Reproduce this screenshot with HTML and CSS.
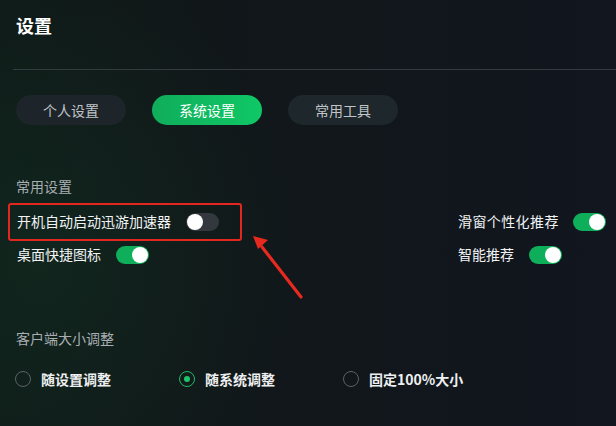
FILE: index.html
```html
<!DOCTYPE html>
<html lang="zh-CN">
<head>
<meta charset="utf-8">
<title>设置</title>
<link rel="stylesheet" href="styles.css">
</head>
<body>
<div class="page">
  <h1 class="title">设置</h1>
  <div class="divider"></div>
  <nav class="tabs">
    <span class="tab">个人设置</span>
    <span class="tab active">系统设置</span>
    <span class="tab">常用工具</span>
  </nav>

  <section class="section">
    <h2 class="section-title">常用设置</h2>
    <div class="grid">
      <div class="row"><span class="label">开机自动启动迅游加速器</span><span class="toggle"></span></div>
      <div class="row wide"><span class="label">滑窗个性化推荐</span><span class="toggle on"></span></div>
      <div class="row"><span class="label">桌面快捷图标</span><span class="toggle on"></span></div>
      <div class="row"><span class="label">智能推荐</span><span class="toggle on"></span></div>
    </div>
  </section>

  <section class="section size">
    <h2 class="section-title">客户端大小调整</h2>
    <div class="radios">
      <label class="radio"><span class="dot"></span><span class="label">随设置调整</span></label>
      <label class="radio"><span class="dot checked"></span><span class="label">随系统调整</span></label>
      <label class="radio"><span class="dot"></span><span class="label">固定100%大小</span></label>
    </div>
  </section>

  <div class="highlight"></div>
  <svg class="arrow" width="70" height="80" viewBox="0 0 70 80">
    <path d="M51 66 L12 16" stroke="#e8291f" stroke-width="3.2" stroke-linecap="round" fill="none"/>
    <polygon points="3,5 18,9 8,18" fill="#e8291f"/>
  </svg>
</div>
</body>
</html>
```

FILE: styles.css
```css
* { box-sizing: border-box; margin: 0; padding: 0; }
html, body { width: 616px; height: 426px; overflow: hidden; }
body {
  font-family: "Noto Sans CJK SC", "Noto Sans", sans-serif;
  color: #f2f3f4;
  background:
    radial-gradient(ellipse 260px 300px at 40px 260px, rgba(20, 60, 40, 0.35), rgba(20, 60, 40, 0) 100%),
    linear-gradient(90deg, #0f1a18 0%, #111719 35%, #11161f 100%);
}
.page { position: relative; height: 426px; padding: 13px 0 0 16px; }
.title { font-size: 18px; font-weight: 700; line-height: 24px; color: #ffffff; }
.divider { height: 1px; background: #343b40; margin: 32px 0 0 -3px; }
.tabs { display: flex; gap: 26px; margin: 25px 0 0 0; }
.tab {
  width: 110px; height: 30px; border-radius: 15px;
  display: flex; align-items: center; justify-content: center;
  font-size: 14px; color: #c0c4c8; background: #1d242a;
}
.tab:last-child { background: #1e272c; }
.tab.active { color: #ffffff; background: linear-gradient(90deg, #10ad5b, #0fc866); }
.section { margin-top: 51px; }
.section-title { font-size: 14px; font-weight: 400; line-height: 20px; color: #a9aeb2; }
.grid { display: grid; grid-template-columns: 441px auto; row-gap: 14px; margin-top: 16px; padding-left: 1px; }
.row { display: flex; align-items: center; gap: 15px; height: 19px; }
.row.wide { gap: 14px; }
.row.wide .label { letter-spacing: 0.4px; }
.label { font-size: 14px; line-height: 19px; color: #f2f3f4; }
.toggle { position: relative; width: 33px; height: 18px; border-radius: 9px; background: #32383e; }
.toggle::after {
  content: ""; position: absolute; top: 1px; left: 1px;
  width: 16px; height: 16px; border-radius: 50%; background: #ffffff;
}
.toggle.on { background: #0fae5a; }
.toggle.on::after { left: 16px; }
.size { margin-top: 64px; }
.radios { display: grid; grid-template-columns: 164px 164px auto; margin: 21px 0 0 -1px; }
.radio { display: flex; align-items: center; gap: 10px; height: 20px; }
.radio .label { font-weight: 700; color: #eeeff0; }
.dot { width: 16px; height: 16px; border-radius: 50%; border: 1px solid #5b6167; position: relative; }
.dot.checked { border-color: #1fb866; }
.dot.checked::after {
  content: ""; position: absolute; top: 4px; left: 4px;
  width: 6px; height: 6px; border-radius: 50%; background: #1fc46c;
}
.highlight {
  position: absolute; left: 8px; top: 203px; width: 234px; height: 38px;
  border: 2px solid #e3271f; border-radius: 3px;
}
.arrow { position: absolute; left: 250px; top: 231px; }
```
